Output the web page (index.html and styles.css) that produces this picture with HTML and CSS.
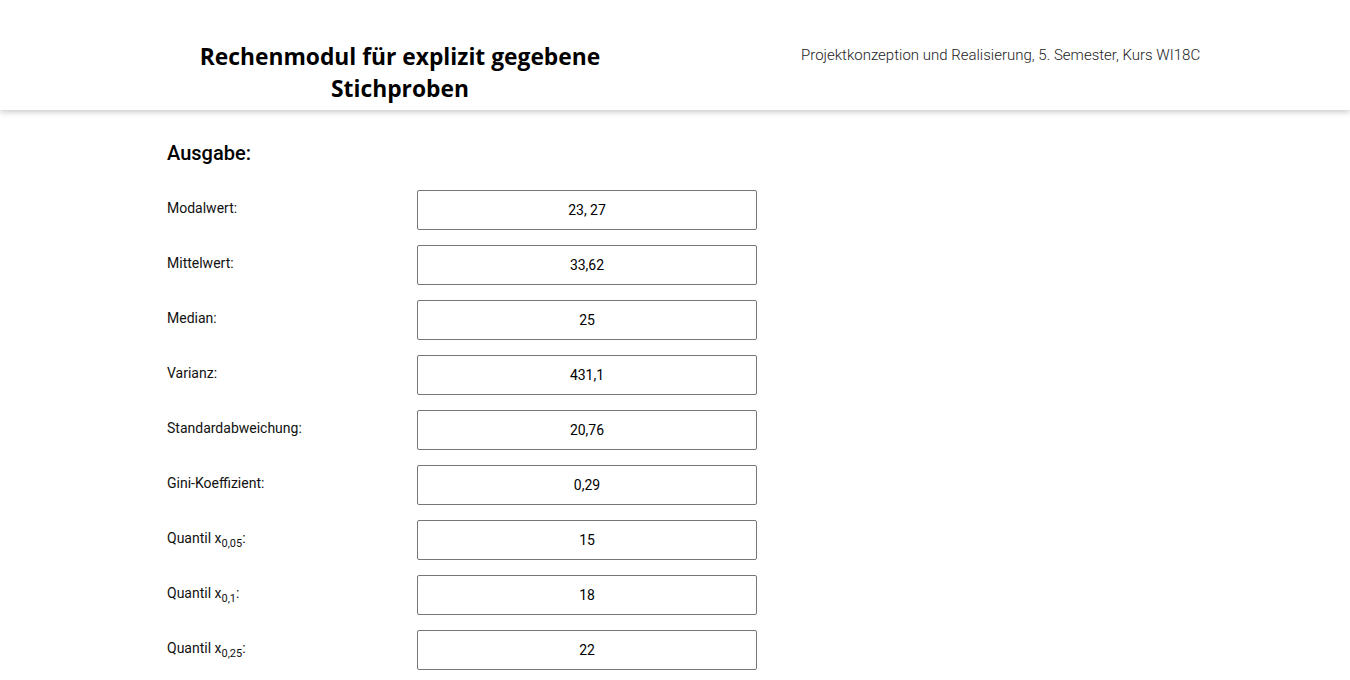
FILE: index.html
```html
<!DOCTYPE html>
<html lang="de">
<head>
<meta charset="utf-8">
<title>Rechenmodul</title>
<link rel="stylesheet" href="styles.css">
</head>
<body>
<header class="top">
  <div class="title-col">
    <h1 class="title">Rechenmodul für explizit gegebene Stichproben</h1>
  </div>
  <div class="sub-col">
    <p class="subtitle">Projektkonzeption und Realisierung, 5. Semester, Kurs WI18C</p>
  </div>
</header>
<main class="content">
  <h2 class="section">Ausgabe:</h2>
  <div class="row"><label class="lbl">Modalwert:</label><input class="val" type="text" value="23, 27" readonly></div>
  <div class="row"><label class="lbl">Mittelwert:</label><input class="val" type="text" value="33,62" readonly></div>
  <div class="row"><label class="lbl">Median:</label><input class="val" type="text" value="25" readonly></div>
  <div class="row"><label class="lbl">Varianz:</label><input class="val" type="text" value="431,1" readonly></div>
  <div class="row"><label class="lbl">Standardabweichung:</label><input class="val" type="text" value="20,76" readonly></div>
  <div class="row"><label class="lbl">Gini-Koeffizient:</label><input class="val" type="text" value="0,29" readonly></div>
  <div class="row"><label class="lbl">Quantil x<sub>0,05</sub>:</label><input class="val" type="text" value="15" readonly></div>
  <div class="row"><label class="lbl">Quantil x<sub>0,1</sub>:</label><input class="val" type="text" value="18" readonly></div>
  <div class="row"><label class="lbl">Quantil x<sub>0,25</sub>:</label><input class="val" type="text" value="22" readonly></div>
  <div class="row"><label class="lbl">Quantil x<sub>0,5</sub>:</label><input class="val" type="text" value="25" readonly></div>
  <div class="row"><label class="lbl">Quantil x<sub>0,75</sub>:</label><input class="val" type="text" value="38" readonly></div>
  <div class="row"><label class="lbl">Quantil x<sub>0,9</sub>:</label><input class="val" type="text" value="61" readonly></div>
  <div class="row"><label class="lbl">Quantil x<sub>0,95</sub>:</label><input class="val" type="text" value="78" readonly></div>
  <div class="row"><label class="lbl">Spannweite:</label><input class="val" type="text" value="92" readonly></div>
  <div class="row"><label class="lbl">Quartilsabstand:</label><input class="val" type="text" value="16" readonly></div>
  <div class="spacer"></div>
</main>
</body>
</html>
```
FILE: styles.css
```css
html, body {
  margin: 0;
  padding: 0;
  background: #ffffff;
  font-family: Roboto, "Liberation Sans", sans-serif;
  color: #000;
}
html {
  overflow-y: scroll;
}
::-webkit-scrollbar {
  width: 17px;
  background: #f1f1f1;
}
::-webkit-scrollbar-track {
  background: #f1f1f1;
}
::-webkit-scrollbar-thumb {
  background: #c1c1c1;
  border-left: 2px solid #f1f1f1;
  border-right: 2px solid #f1f1f1;
}
::-webkit-scrollbar-button:single-button {
  display: block;
  height: 17px;
  background-color: #f1f1f1;
  background-repeat: no-repeat;
  background-position: center;
}
::-webkit-scrollbar-button:single-button:vertical:decrement {
  background-image: url("data:image/svg+xml;utf8,<svg xmlns='http://www.w3.org/2000/svg' width='9' height='5'><polygon points='4.5,0 9,5 0,5' fill='%23a3a3a3'/></svg>");
}
::-webkit-scrollbar-button:single-button:vertical:increment {
  background-image: url("data:image/svg+xml;utf8,<svg xmlns='http://www.w3.org/2000/svg' width='9' height='5'><polygon points='0,0 9,0 4.5,5' fill='%23505050'/></svg>");
}
.top {
  display: flex;
  height: 110px;
  background: #fff;
  box-shadow: 0 2px 6px rgba(0, 0, 0, 0.22);
  position: relative;
  z-index: 1;
}
.title-col {
  width: 466px;
  margin-left: 167px;
  padding-top: 41px;
  box-sizing: border-box;
}
.title {
  margin: 0;
  font-family: "Open Sans", "Noto Sans", sans-serif;
  font-weight: 700;
  font-size: 22.8px;
  line-height: 32px;
  text-align: center;
  color: #000;
}
.sub-col {
  margin-left: 168px;
  padding-top: 46px;
}
.subtitle {
  margin: 0;
  font-family: Roboto, sans-serif;
  font-weight: 300;
  font-size: 15px;
  line-height: 18px;
  color: #222;
}
.content {
  padding: 31px 0 0 167px;
}
.section {
  margin: 0 0 25px 0;
  font-family: Roboto, sans-serif;
  font-weight: 500;
  font-size: 20px;
  line-height: 24px;
}
.row {
  display: flex;
  align-items: center;
  height: 40px;
  margin-bottom: 15px;
}
.lbl {
  width: 250px;
  font-size: 14px;
  font-weight: 400;
  color: #111;
  margin-top: -4px;
}
.lbl sub {
  font-size: 11px;
  vertical-align: -4px;
  line-height: 0;
}
.val {
  width: 340px;
  height: 40px;
  box-sizing: border-box;
  border: 1px solid #767676;
  border-radius: 2px;
  text-align: center;
  font-family: Roboto, sans-serif;
  font-size: 14px;
  color: #000;
  background: #fff;
  padding: 0;
  outline: none;
}
.spacer {
  height: 1600px;
}
```
